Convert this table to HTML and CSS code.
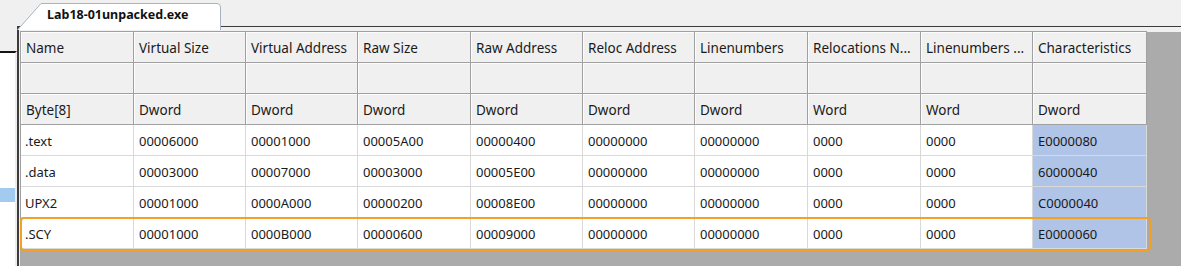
FILE: index.html
```html
<!DOCTYPE html>
<html>
  <head>
    <meta charset="utf-8" />
    <meta name="viewport" content="width=device-width, initial-scale=1" />
    <title>Lab18-01unpacked.exe</title>
    <link rel="stylesheet" href="styles.css">
  </head>
  <body>
    <div class="app">
      <div class="gutter">
        <div class="gutter-top"></div>
        <div class="gutter-body">
          <div class="gutter-sel"></div>
        </div>
      </div>
      <div class="main">
        <div class="tabs">
          <div class="tab">
            <svg class="tab-shape" width="204" height="27" viewBox="0 0 204 27">
              <path d="M0.5 27 L24 0.5 H200 Q203.5 0.5 203.5 4 V27" fill="#fff" stroke="#a7b4c4" />
            </svg>
            <span class="tab-title">Lab18-01unpacked.exe</span>
          </div>
        </div>
        <div class="panel">
          <table class="sections">
            <colgroup>
              <col style="width: 113px" />
              <col style="width: 112px" />
              <col style="width: 112px" />
              <col style="width: 113px" />
              <col style="width: 112px" />
              <col style="width: 112px" />
              <col style="width: 113px" />
              <col style="width: 113px" />
              <col style="width: 112px" />
              <col style="width: 114px" />
            </colgroup>
            <thead>
              <tr>
                <td>Name</td>
                <td>Virtual Size</td>
                <td>Virtual Address</td>
                <td>Raw Size</td>
                <td>Raw Address</td>
                <td>Reloc Address</td>
                <td>Linenumbers</td>
                <td>Relocations N...</td>
                <td>Linenumbers ...</td>
                <td>Characteristics</td>
              </tr>
              <tr>
                <td></td><td></td><td></td><td></td><td></td>
                <td></td><td></td><td></td><td></td><td></td>
              </tr>
              <tr>
                <td>Byte[8]</td>
                <td>Dword</td>
                <td>Dword</td>
                <td>Dword</td>
                <td>Dword</td>
                <td>Dword</td>
                <td>Dword</td>
                <td>Word</td>
                <td>Word</td>
                <td>Dword</td>
              </tr>
            </thead>
            <tbody>
              <tr>
                <td>.text</td>
                <td>00006000</td>
                <td>00001000</td>
                <td>00005A00</td>
                <td>00000400</td>
                <td>00000000</td>
                <td>00000000</td>
                <td>0000</td>
                <td>0000</td>
                <td class="hl">E0000080</td>
              </tr>
              <tr>
                <td>.data</td>
                <td>00003000</td>
                <td>00007000</td>
                <td>00003000</td>
                <td>00005E00</td>
                <td>00000000</td>
                <td>00000000</td>
                <td>0000</td>
                <td>0000</td>
                <td class="hl">60000040</td>
              </tr>
              <tr>
                <td>UPX2</td>
                <td>00001000</td>
                <td>0000A000</td>
                <td>00000200</td>
                <td>00008E00</td>
                <td>00000000</td>
                <td>00000000</td>
                <td>0000</td>
                <td>0000</td>
                <td class="hl">C0000040</td>
              </tr>
              <tr>
                <td>.SCY</td>
                <td>00001000</td>
                <td>0000B000</td>
                <td>00000600</td>
                <td>00009000</td>
                <td>00000000</td>
                <td>00000000</td>
                <td>0000</td>
                <td>0000</td>
                <td class="hl">E0000060</td>
              </tr>
            </tbody>
          </table>
          <!-- focus rectangle of the current row -->
          <div class="row-focus"></div>
        </div>
      </div>
    </div>
  </body>
</html>
```

FILE: styles.css
```css
html,
body {
  margin: 0;
  height: 100%;
  overflow: hidden;
}
body {
  background: #f0f0f0;
  font-family: "Noto Sans", "Liberation Sans", sans-serif;
  color: #1a1a1a;
}
.app {
  display: flex;
  height: 266px;
}

/* left neighbour pane */
.gutter {
  width: 17px;
  display: flex;
  flex-direction: column;
}
.gutter-top {
  height: 51px;
}
.gutter-body {
  flex: 1;
  background: #fff;
  border-top: 2px solid #141414;
  border-right: 2px solid #ececec;
}
.gutter-sel {
  margin-top: 135px;
  height: 14px;
  background: #a3cbef;
}

.main {
  flex: 1;
  display: flex;
  flex-direction: column;
}
.tabs {
  height: 26px;
}
.tab {
  position: relative;
  z-index: 1;
  width: 204px;
  height: 27px;
  margin-top: 3px;
}
.tab-shape {
  position: absolute;
  left: 0;
  top: 0;
}
.tab-title {
  position: relative;
  display: block;
  padding: 3px 0 0 30px;
  font-size: 12.5px;
  font-weight: 700;
  line-height: 18px;
  color: #111;
}

.panel {
  position: relative;
  flex: 1;
  background: #ababab;
  border-top: 1px solid #3c3c3c;
  border-left: 2px solid #3c3c3c;
  padding: 4px 0 0 1px;
  box-shadow: inset 1px 5px 0 #f0f0f0;
}
.sections {
  table-layout: fixed;
  width: 1127px;
  border-collapse: separate;
  border-spacing: 0;
  border-left: 1px solid #a0a0a0;
  border-top: 1px solid #a0a0a0;
  font-size: 13px;
}
.sections tr {
  height: 31px;
}
.sections td {
  padding: 1px 5px 0;
  white-space: nowrap;
  overflow: hidden;
  vertical-align: middle;
}
.sections thead td {
  background: #f0f0f0;
  border-right: 1px solid #a0a0a0;
  border-bottom: 1px solid #a0a0a0;
  box-shadow: inset 1px 1px 0 #fcfcfc;
  font-size: 13.5px;
}
.sections tbody td {
  background: #fff;
  border-right: 1px solid #d9d9d9;
  border-bottom: 1px solid #d9d9d9;
  padding-left: 4px;
}
.sections tbody td + td {
  padding-left: 5px;
}
.sections tbody td.hl {
  background: #afc4e6;
}
.row-focus {
  position: absolute;
  left: 1px;
  top: 190px;
  width: 1131px;
  height: 34px;
  box-sizing: border-box;
  border: 2px solid #f0a126;
  border-radius: 4px;
}
```
